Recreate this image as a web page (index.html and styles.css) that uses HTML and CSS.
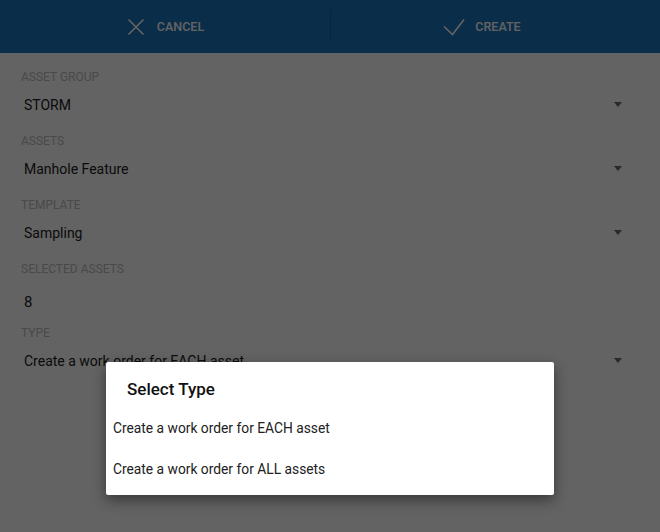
FILE: index.html
```html
<!DOCTYPE html>
<html>
<head>
<meta charset="utf-8">
<link rel="stylesheet" href="styles.css">
</head>
<body>
<div class="screen">
  <header class="topbar">
    <button class="action action-cancel">
      <svg class="icon" width="24" height="24" viewBox="0 0 24 24"><path d="M4.5 4.5 L19.5 19.5 M19.5 4.5 L4.5 19.5" fill="none" stroke="#fff" stroke-width="1.6"/></svg>
      <span>CANCEL</span>
    </button>
    <div class="divider"></div>
    <button class="action action-create">
      <svg class="icon" width="22" height="24" viewBox="0 0 22 24"><path d="M1 11.5 L9.5 19.5 L21 4.5" fill="none" stroke="#fff" stroke-width="1.6"/></svg>
      <span>CREATE</span>
    </button>
  </header>

  <main class="form">
    <div class="field">
      <div class="label">ASSET GROUP</div>
      <div class="select"><span>STORM</span><i class="arrow"></i></div>
    </div>
    <div class="field">
      <div class="label">ASSETS</div>
      <div class="select"><span>Manhole Feature</span><i class="arrow"></i></div>
    </div>
    <div class="field">
      <div class="label">TEMPLATE</div>
      <div class="select"><span>Sampling</span><i class="arrow"></i></div>
    </div>
    <div class="field">
      <div class="label">SELECTED ASSETS</div>
      <div class="static">8</div>
    </div>
    <div class="field">
      <div class="label">TYPE</div>
      <div class="select"><span>Create a work order for EACH asset</span><i class="arrow"></i></div>
    </div>
  </main>

  <div class="overlay"></div>

  <div class="dialog">
    <div class="dialog-title">Select Type</div>
    <div class="dialog-item">Create a work order for EACH asset</div>
    <div class="dialog-item">Create a work order for ALL assets</div>
  </div>
</div>
</body>
</html>
```

FILE: styles.css
```css
* { box-sizing: border-box; }
html, body {
  margin: 0;
  padding: 0;
  background: #fff;
  font-family: Roboto, "Noto Sans", sans-serif;
}
.screen {
  width: 660px;
  height: 532px;
  position: relative;
  overflow: hidden;
  background: #fff;
}
.topbar {
  height: 53px;
  background: #1c74bc;
  display: flex;
  align-items: center;
}
.action {
  height: 53px;
  border: 0;
  background: transparent;
  color: #fff;
  font-family: inherit;
  font-size: 12.5px;
  font-weight: 500;
  display: flex;
  align-items: center;
  justify-content: center;
  padding: 0;
}
.action-cancel {
  width: 330px;
  flex: none;
  padding-right: 2px;
}
.action-cancel .icon { margin-right: 9px; }
.action-create {
  flex: 1;
  padding-right: 27px;
}
.action-create .icon { margin-right: 10px; }
.divider {
  width: 1px;
  height: 33px;
  background: rgba(0, 0, 0, 0.15);
}
.form {
  padding: 16px 21px 0 21px;
}
.field {
  height: 64px;
}
.label {
  font-size: 12px;
  line-height: 16px;
  color: #bdbdbd;
}
.select {
  height: 40px;
  display: flex;
  align-items: center;
  padding-left: 3px;
  padding-right: 17px;
  font-size: 14px;
  color: #212121;
}
.select span { flex: 1; }
.arrow {
  width: 0;
  height: 0;
  border-left: 4.5px solid transparent;
  border-right: 4.5px solid transparent;
  border-top: 5px solid #6a6a6a;
  margin-top: -2px;
}
.static {
  margin-top: 5px;
  height: 40px;
  line-height: 40px;
  padding-left: 3px;
  font-size: 15px;
  color: #212121;
}
.overlay {
  position: absolute;
  inset: 0;
  background: rgba(0, 0, 0, 0.61);
}
.dialog {
  position: absolute;
  left: 106px;
  top: 362px;
  width: 448px;
  height: 133px;
  background: #fff;
  border-radius: 2px;
  box-shadow: 0 5px 14px rgba(0, 0, 0, 0.45);
  padding-top: 15px;
}
.dialog-title {
  padding-left: 21px;
  font-size: 17px;
  font-weight: 500;
  line-height: 24px;
  color: #111;
  margin-bottom: 7px;
}
.dialog-item {
  padding-left: 7px;
  font-size: 13.8px;
  line-height: 41px;
  color: #212121;
}
```
